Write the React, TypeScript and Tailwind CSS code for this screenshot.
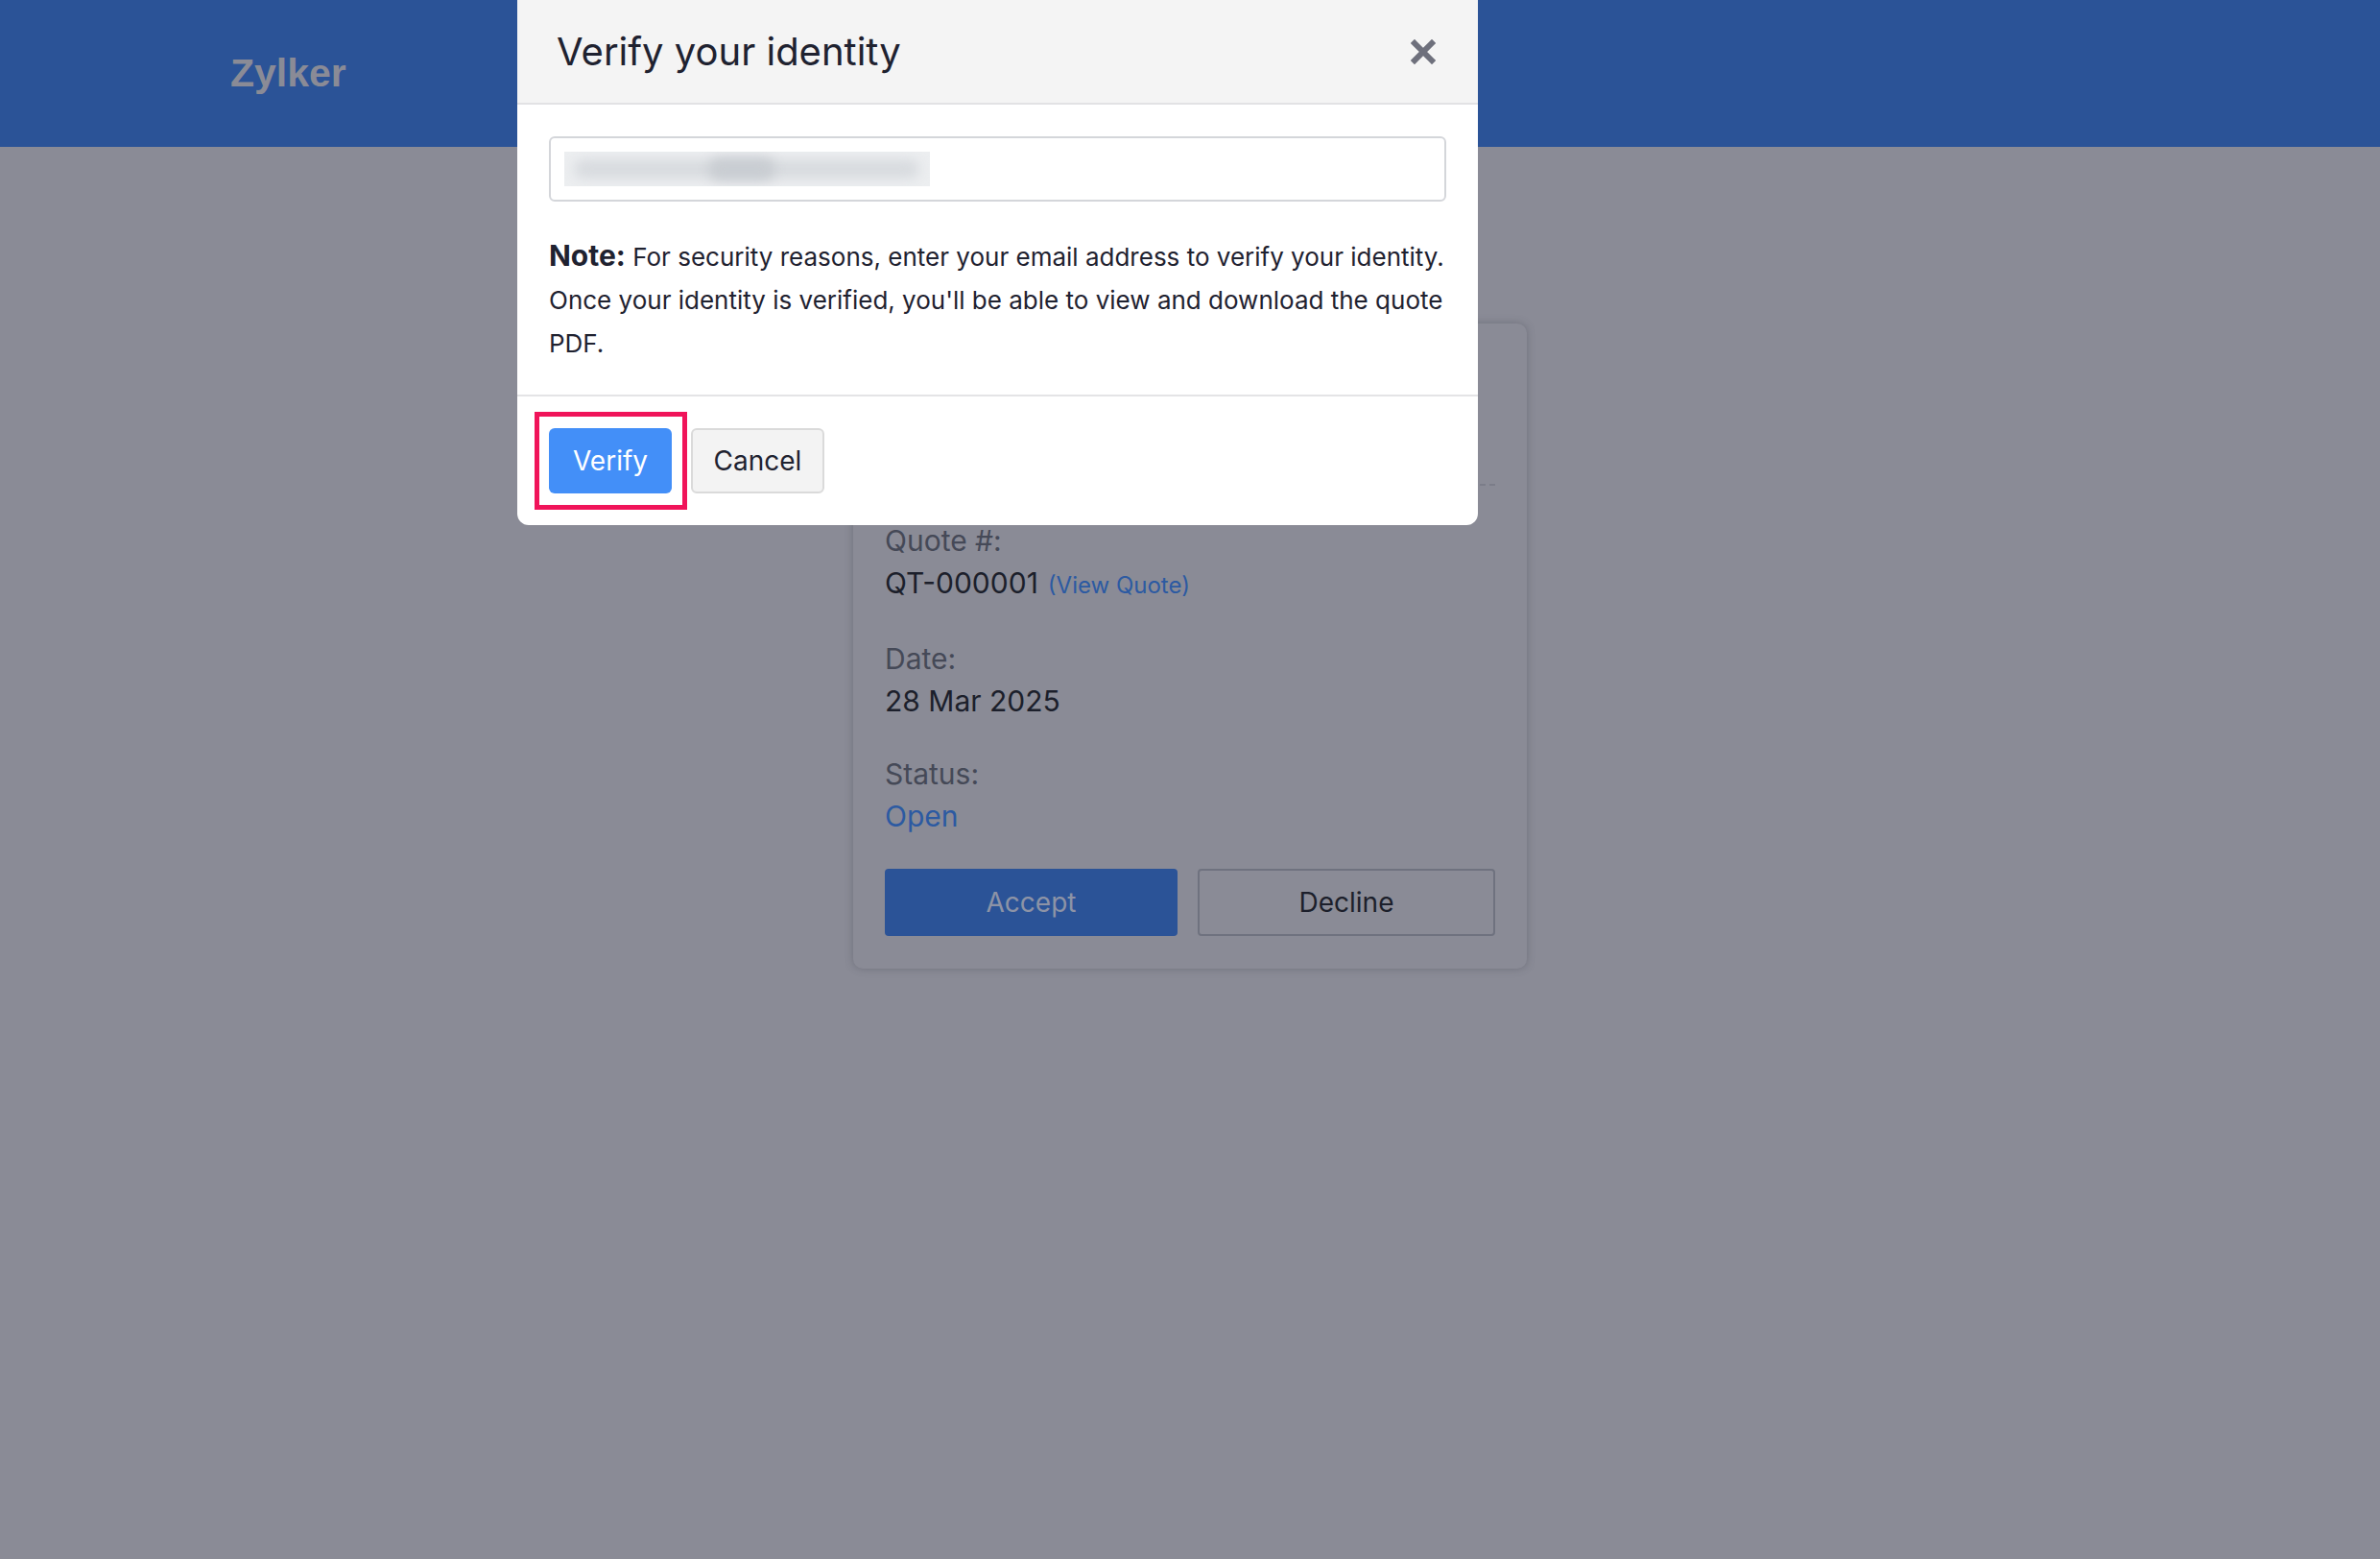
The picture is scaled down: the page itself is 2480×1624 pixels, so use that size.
import React from "react";

const inter = { fontFamily: "Inter, 'Noto Sans', sans-serif" };

export default function App() {
  return (
    <div className="relative w-full h-[1624px] bg-[#8a8b96] overflow-hidden" style={inter}>
      {/* Top bar */}
      <div className="h-[153px] bg-[#2b5397] flex items-center pl-[240px]">
        <span
          className="text-[41px] font-bold text-[#8a8b96] leading-none"
          style={{ fontFamily: "'Liberation Sans', Arial, sans-serif" }}
        >
          Zylker
        </span>
      </div>

      {/* Quote card (dimmed behind overlay) */}
      <div className="mx-auto mt-[184px] w-[702px] h-[672px] rounded-[10px] bg-[#8a8b96] shadow-[0_0_8px_rgba(60,62,75,0.35)] px-[33px] pt-[33px]">
        <div className="h-[136px] border-b-2 border-dashed border-[#7b7d89]" />
        <div className="mt-[35px] flex flex-col gap-[32px] text-[30px] leading-[44px]">
          <div className="flex flex-col">
            <span className="text-[#454957]">Quote #:</span>
            <span className="text-[#1c1f2b] flex items-baseline gap-[10px]">
              QT-000001
              <span className="text-[24px] text-[#2c5aa2]">(View Quote)</span>
            </span>
          </div>
          <div className="flex flex-col">
            <span className="text-[#454957]">Date:</span>
            <span className="text-[#1c1f2b]">28 Mar 2025</span>
          </div>
          <div className="flex flex-col">
            <span className="text-[#454957]">Status:</span>
            <span className="text-[#2c5aa2]">Open</span>
          </div>
        </div>
        <div className="mt-[33px] flex gap-[21px]">
          <div className="w-[305px] h-[70px] rounded-[4px] bg-[#2b5397] flex items-center justify-center text-[28px] text-[#8d93a6]">
            Accept
          </div>
          <div className="w-[310px] h-[70px] rounded-[4px] border-2 border-[#6f727f] flex items-center justify-center text-[28px] text-[#1c1f2b]">
            Decline
          </div>
        </div>
      </div>

      {/* Modal */}
      <div className="absolute left-[539px] top-0 w-[1001px] h-[547px] bg-white rounded-b-[12px] flex flex-col overflow-hidden">
        <div className="h-[109px] bg-[#f4f4f4] border-b-2 border-[#e2e2e4] flex items-center justify-between pl-[41px] pr-[44px]">
          <span className="text-[40px] text-[#1f2230] leading-none">Verify your identity</span>
          <svg width="26" height="26" viewBox="0 0 26 26">
            <path d="M4 4 L22 22 M22 4 L4 22" stroke="#6e707c" strokeWidth="6" strokeLinecap="square" />
          </svg>
        </div>
        <div className="px-[33px] pt-[33px] pb-[31px] border-b-2 border-[#e4e4e6]">
          <div className="h-[68px] rounded-[6px] border-2 border-[#d4d6da] flex items-center pl-[14px]">
            <div className="relative w-[381px] h-[36px] bg-[#eceef0] overflow-hidden">
              <div className="absolute left-[10px] top-[8px] w-[360px] h-[20px] rounded-full bg-[#d8dbdf] blur-[6px]" />
              <div className="absolute left-[150px] top-[6px] w-[70px] h-[24px] rounded-full bg-[#c9cdd2] blur-[6px]" />
            </div>
          </div>
          <p className="mt-[34px] text-[26px] leading-[45px] text-[#1f2230]">
            <span className="font-bold text-[30px]">Note:</span> For security reasons, enter your email address to verify your identity. Once your identity is verified, you'll be able to view and download the quote PDF.
          </p>
        </div>
        <div className="flex items-center gap-[20px] pl-[33px] pt-[33px]">
          <div className="relative">
            <div className="absolute left-[-15px] right-[-16px] top-[-17px] bottom-[-17px] border-[5px] border-[#f0145a]" />
            <div className="w-[128px] h-[68px] rounded-[6px] bg-[#438ff8] flex items-center justify-center text-[28px] text-white">
              Verify
            </div>
          </div>
          <div className="w-[139px] h-[68px] rounded-[6px] bg-[#f3f3f3] border-2 border-[#dadada] flex items-center justify-center text-[28px] text-[#1f2230]">
            Cancel
          </div>
        </div>
      </div>
    </div>
  );
}
